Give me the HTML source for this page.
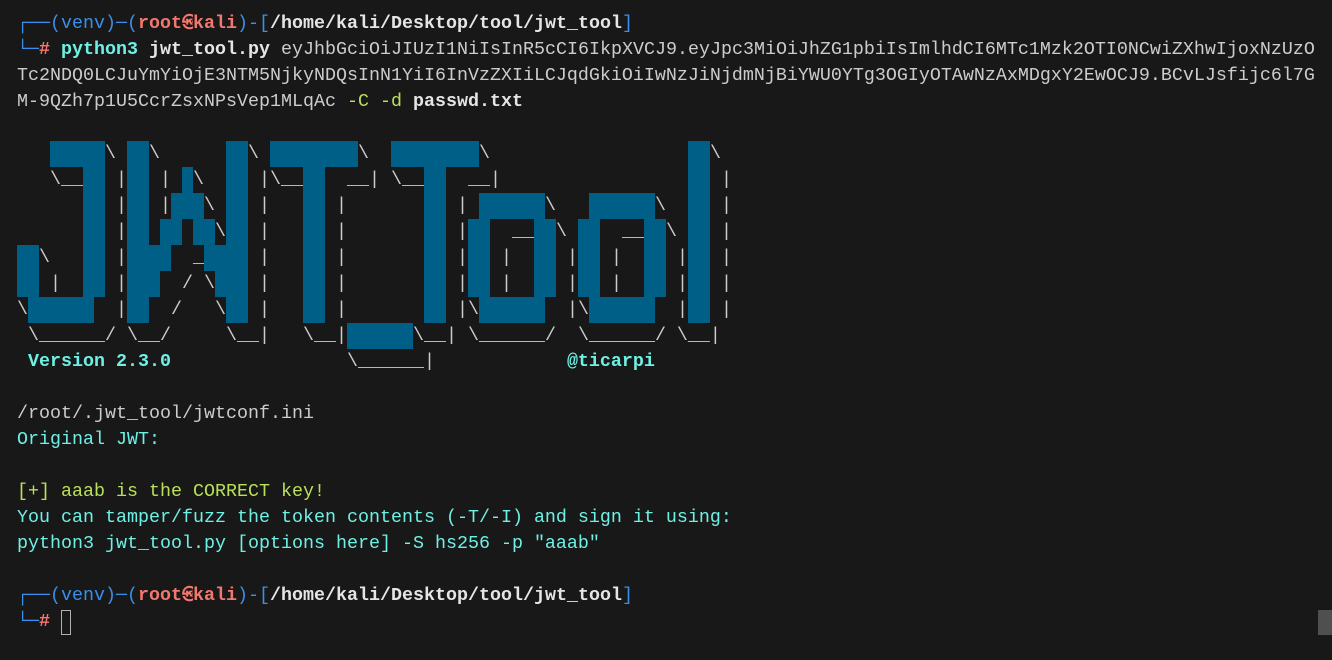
<!DOCTYPE html>
<html><head><meta charset="utf-8"><style>
html,body{margin:0;padding:0;background:#181818;width:1332px;height:660px;overflow:hidden}
#t{position:absolute;left:17px;top:11px;font-family:"Liberation Mono","DejaVu Sans Mono",monospace;font-size:18.33px;line-height:26px;color:#cccccc;white-space:normal}
#t div{height:26px;white-space:pre}
b{font-weight:normal;display:inline-block;height:26px;vertical-align:top;background:#005f87}
.bl{color:#3b8eea}
.rd{color:#f1786e;font-weight:bold}
.pa{color:#e5e5e5;font-weight:bold}
.cy{color:#6ff0e4;font-weight:bold}
.gr{color:#b8e05a}
.c{color:#6ff0e4;font-weight:bold}
.cn{color:#6ff0e4}
.wb{color:#e5e5e5;font-weight:bold}
.k{display:inline-block;width:11px;overflow:hidden;vertical-align:top;font-size:15px}
#cur{position:absolute;left:61px;top:610px;width:8px;height:23px;border:1.5px solid #b0b0b0}
#sb{position:absolute;left:1318px;top:610px;width:14px;height:25px;background:#4f4f4f}
</style></head><body>
<div id="t"><div><span class="bl">┌──(venv)─(</span><span class="rd">root<span class="k">㉿</span>kali</span><span class="bl">)-[</span><span class="pa">/home/kali/Desktop/tool/jwt_tool</span><span class="bl">]</span></div><div><span class="bl">└─</span><span class="rd">#</span> <span class="cy">python3</span> <span class="wb">jwt_tool.py</span> eyJhbGciOiJIUzI1NiIsInR5cCI6IkpXVCJ9.eyJpc3MiOiJhZG1pbiIsImlhdCI6MTc1Mzk2OTI0NCwiZXhwIjoxNzUzO</div><div>Tc2NDQ0LCJuYmYiOjE3NTM5NjkyNDQsInN1YiI6InVzZXIiLCJqdGkiOiIwNzJiNjdmNjBiYWU0YTg3OGIyOTAwNzAxMDgxY2EwOCJ9.BCvLJsfijc6l7G</div><div>M-9QZh7p1U5CcrZsxNPsVep1MLqAc <span class="gr">-C -d</span> <span class="wb">passwd.txt</span></div><div></div><div>   <b>     </b>\ <b>  </b>\      <b>  </b>\ <b>        </b>\  <b>        </b>\                  <b>  </b>\</div><div>   \__<b>  </b> |<b>  </b> | <b> </b>\  <b>  </b> |\__<b>  </b>  __| \__<b>  </b>  __|                 <b>  </b> |</div><div>      <b>  </b> |<b>  </b> |<b>   </b>\ <b>  </b> |   <b>  </b> |       <b>  </b> | <b>      </b>\   <b>      </b>\  <b>  </b> |</div><div>      <b>  </b> |<b>  </b> <b>  </b> <b>  </b>\<b>  </b> |   <b>  </b> |       <b>  </b> |<b>  </b>  __<b>  </b>\ <b>  </b>  __<b>  </b>\ <b>  </b> |</div><div><b>  </b>\   <b>  </b> |<b>    </b>  _<b>    </b> |   <b>  </b> |       <b>  </b> |<b>  </b> |  <b>  </b> |<b>  </b> |  <b>  </b> |<b>  </b> |</div><div><b>  </b> |  <b>  </b> |<b>   </b>  / \<b>   </b> |   <b>  </b> |       <b>  </b> |<b>  </b> |  <b>  </b> |<b>  </b> |  <b>  </b> |<b>  </b> |</div><div>\<b>      </b>  |<b>  </b>  /   \<b>  </b> |   <b>  </b> |       <b>  </b> |\<b>      </b>  |\<b>      </b>  |<b>  </b> |</div><div> \______/ \__/     \__|   \__|<b>      </b>\__| \______/  \______/ \__|</div><div> <span class="c">Version 2.3.0</span>                \______|            <span class="c">@ticarpi</span></div><div></div><div>/root/.jwt_tool/jwtconf.ini</div><div class="cn">Original JWT:</div><div></div><div class="gr">[+] aaab is the CORRECT key!</div><div class="cn">You can tamper/fuzz the token contents (-T/-I) and sign it using:</div><div class="cn">python3 jwt_tool.py [options here] -S hs256 -p "aaab"</div><div></div><div><span class="bl">┌──(venv)─(</span><span class="rd">root<span class="k">㉿</span>kali</span><span class="bl">)-[</span><span class="pa">/home/kali/Desktop/tool/jwt_tool</span><span class="bl">]</span></div><div><span class="bl">└─</span><span class="rd">#</span> </div></div>
<div id="cur"></div>
<div id="sb"></div>
</body></html>
